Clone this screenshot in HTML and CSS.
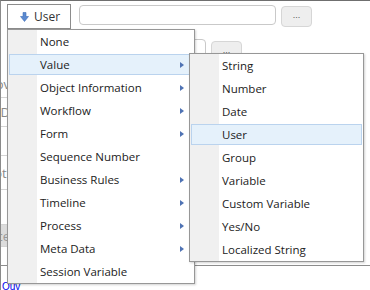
FILE: index.html
```html
<!DOCTYPE html>
<html lang="en">
<head>
  <meta charset="UTF-8" />
  <title>Expression Picker</title>
  <link rel="stylesheet" href="styles.css">
</head>
<body>
  <div class="frame">
    <div class="toolbar">
      <button class="type-btn">
        <svg class="down" width="9" height="10" viewBox="0 0 9 10">
          <path d="M3 0.5h3v4h2.5l-4 5l-4-5h2.5z" fill="#5b8ad0" stroke="#3f6fb8" stroke-width="0.6"/>
        </svg>
        User
      </button>
      <input class="field" type="text">
      <button class="dots">...</button>
    </div>

    <div class="toolbar second">
      <input class="field short" type="text">
      <button class="dots">...</button>
    </div>

    <div class="grid">
      <div class="cell h28">Nov</div>
      <div class="cell h29">DD</div>
      <div class="cell h29 dark">l</div>
      <div class="cell h34">Noti</div>
      <div class="cell h35"></div>
      <div class="cell h22 shaded">Place</div>
      <div class="cell h19"></div>
    </div>
    <div class="footer"><a href="#">Ouv</a></div>

    <!-- dropdown menu lies over the form -->
    <ul class="menu main">
      <li class="item">None</li>
      <li class="item active">Value<span class="arrow"></span></li>
      <li class="item">Object Information<span class="arrow"></span></li>
      <li class="item">Workflow<span class="arrow"></span></li>
      <li class="item">Form<span class="arrow"></span></li>
      <li class="item">Sequence Number</li>
      <li class="item">Business Rules<span class="arrow"></span></li>
      <li class="item">Timeline<span class="arrow"></span></li>
      <li class="item">Process<span class="arrow"></span></li>
      <li class="item">Meta Data<span class="arrow"></span></li>
      <li class="item">Session Variable</li>
    </ul>

    <ul class="menu sub">
      <li class="item">String</li>
      <li class="item">Number</li>
      <li class="item">Date</li>
      <li class="item active">User</li>
      <li class="item">Group</li>
      <li class="item">Variable</li>
      <li class="item">Custom Variable</li>
      <li class="item">Yes/No</li>
      <li class="item">Localized String</li>
    </ul>
  </div>
</body>
</html>
```

FILE: styles.css
```css
body {
  margin: 0;
  background: #fff;
  font-family: 'Open Sans', 'Noto Sans', sans-serif;
  font-size: 11.5px;
  color: #222;
}

.frame {
  position: relative;
  width: 369px;
  height: 289px;
  border: 1px solid #6f6f6f;
  border-left-color: #8a8a8a;
  overflow: hidden;
}

.toolbar {
  display: flex;
  align-items: flex-start;
  padding: 3px 0 0 6px;
}

.toolbar.second {
  padding: 0 0 0 78px;
  margin-top: 10px;
}

.type-btn {
  display: flex;
  align-items: center;
  gap: 5px;
  width: 64px;
  height: 25px;
  padding: 0 0 0 12px;
  border: 1px solid #8c8c8c;
  background: #fff;
  font: inherit;
  font-size: 12px;
  color: #333;
}

.down {
  margin-top: 1px;
}

.field {
  box-sizing: border-box;
  width: 197px;
  height: 20px;
  margin: 1px 0 0 8px;
  border: 1px solid #c9c9c9;
  border-radius: 4px;
  background: #fff;
}

.field.short {
  width: 127px;
  margin: 0;
}

.dots {
  box-sizing: border-box;
  width: 31px;
  height: 21px;
  margin: 2px 0 0 5px;
  padding: 0 0 3px;
  border: 1px solid #d6d6d6;
  border-radius: 4px;
  background: #eeeeee;
  font-size: 9px;
  color: #555;
  line-height: 14px;
}

.grid {
  margin-top: 8px;
  width: 9px;
}

.cell {
  direction: rtl;
  overflow: hidden;
  white-space: nowrap;
  border-bottom: 1px solid #d4d4d4;
  color: #888;
  font-size: 13px;
  display: flex;
  align-items: center;
  box-sizing: border-box;
}

.cell.dark { color: #666; }
.cell.shaded { background: #dcdcdc; color: #999; }

.h19 { height: 19px; }
.h22 { height: 22px; }
.h28 { height: 28px; }
.h29 { height: 29px; }
.h34 { height: 34px; }
.h35 { height: 35px; }

.footer {
  border-top: 1px solid #8c8c8c;
  margin-top: -1px;
  padding: 14px 0 0 1px;
  height: 12px;
  line-height: 12px;
}

.footer a {
  font-family: 'Liberation Sans', sans-serif;
  font-size: 10px;
  color: #0000ee;
}

.menu {
  position: absolute;
  margin: 0;
  padding: 0;
  list-style: none;
  background: linear-gradient(to right, #f0f0f0 29px, #fff 29px);
  border: 1px solid #979797;
  box-shadow: 1px 1px 2px rgba(0, 0, 0, 0.18);
}

.menu.main {
  left: 6px;
  top: 28px;
  width: 186px;
}

.menu.sub {
  left: 188px;
  top: 52px;
  width: 173px;
}

.item {
  position: relative;
  z-index: 0;
  display: flex;
  align-items: center;
  height: 23px;
  padding-left: 32px;
  white-space: nowrap;
}

.item.active::before {
  content: "";
  position: absolute;
  z-index: -1;
  inset: 1px 1px 1px 1px;
  background: #e5f1fb;
  border: 1px solid #bad3ee;
}

.arrow {
  margin-left: auto;
  margin-right: 10px;
  border-left: 4px solid #4f73b4;
  border-top: 3.5px solid transparent;
  border-bottom: 3.5px solid transparent;
}
```
